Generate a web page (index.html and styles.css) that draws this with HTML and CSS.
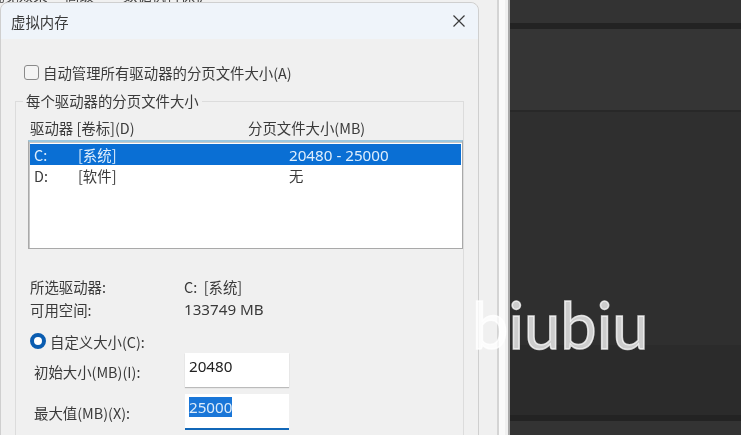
FILE: index.html
```html
<!DOCTYPE html>
<html lang="zh">
<head>
<meta charset="utf-8">
<title>虚拟内存</title>
<link rel="stylesheet" href="styles.css">
</head>
<body>
<div class="screen">
  <div class="backwin">
    <div class="tabs"><span class="tab-a">视觉效果</span><span class="tab-b">高级</span><span class="tab-c">数据执行保护</span></div>
    <div class="strip"></div>
  </div>
  <div class="dark">
    <div class="band h23 c33"></div>
    <div class="band h6 c22"></div>
    <div class="band h81 c34"></div>
    <div class="band h2 c27"></div>
    <div class="band h233 c30"></div>
    <div class="band h70 c2a"></div>
    <div class="band h6 c22"></div>
    <div class="band h14 c33"></div>
  </div>

  <section class="dialog">
    <header class="titlebar">
      <span>虚拟内存</span>
      <svg class="close" width="14" height="14" viewBox="0 0 14 14"><path d="M1.5 1.5 12.5 12.5M12.5 1.5 1.5 12.5" stroke="#3a3a3a" stroke-width="1.2" fill="none"/></svg>
    </header>
    <div class="content">
      <label class="auto"><span class="check"></span>自动管理所有驱动器的分页文件大小(A)</label>
      <fieldset class="group">
        <legend>每个驱动器的分页文件大小</legend>
        <div class="heads"><span>驱动器 [卷标](D)</span><span>分页文件大小(MB)</span></div>
        <div class="list">
          <div class="row selected"><span class="drv">C:</span><span class="vol">[系统]</span><span class="size num">20480 - 25000</span></div>
          <div class="row"><span class="drv">D:</span><span class="vol">[软件]</span><span class="size">无</span></div>
        </div>
        <div class="info first"><span class="k">所选驱动器:</span><span>C:&nbsp;&nbsp;[系统]</span></div>
        <div class="info second"><span class="k">可用空间:</span><span class="num">133749 MB</span></div>
        <label class="radio-line"><span class="radio"></span>自定义大小(C):</label>
        <div class="field"><span class="flabel">初始大小(MB)(I):</span><div class="input num">20480</div></div>
        <div class="field next"><span class="flabel">最大值(MB)(X):</span><div class="input focus num"><span class="sel">25000</span></div></div>
      </fieldset>
    </div>
  </section>

  <div class="mark">biubiu</div>
</div>
</body>
</html>
```
FILE: styles.css
```css
* { box-sizing: border-box; }
html, body { margin: 0; padding: 0; }
body { width: 741px; height: 435px; overflow: hidden; background: #f0f0f0; font-family: "Noto Sans CJK SC", "Noto Sans", sans-serif; }
.screen { position: relative; display: flex; width: 741px; height: 435px; overflow: hidden; }

.backwin { position: relative; display: flex; justify-content: flex-end; flex: none; width: 510px; height: 435px; background: #f0f0f0; border-right: 2px solid #a8a8a8; }
.tabs { position: absolute; left: -10px; top: -13px; display: flex; font-size: 14.4px; line-height: 16px; color: #444; filter: blur(.6px); }
.tab-a { width: 75px; }
.tab-b { width: 58px; }
.strip { width: 8px; margin-right: 3px; background: #fafafa; border-left: 2px solid #d4d4d4; }

.dark { flex: 1; display: flex; flex-direction: column; }
.band { flex: none; }
.h23 { height: 23px; } .h6 { height: 6px; } .h81 { height: 81px; } .h2 { height: 2px; }
.h233 { height: 233px; } .h70 { height: 70px; } .h14 { height: 14px; }
.c33 { background: #333; } .c22 { background: #232323; } .c34 { background: #353535; }
.c27 { background: #282828; } .c30 { background: #2f2f2f; } .c2a { background: #2b2b2b; }

.dialog { position: absolute; left: 0; top: 2px; width: 479px; height: 450px; background: #f0f0f0; border: 1px solid #cfcfcf; border-radius: 8px 8px 0 0; color: #3a3a3a; font-size: 14.4px; }
.dialog > * { filter: blur(.45px); }
.titlebar { display: flex; align-items: center; justify-content: space-between; height: 36px; padding: 0 12px 0 10px; background: #eff4fa; border-radius: 8px 8px 0 0; }
.close { display: block; }
.content { padding: 23px 17px 0 14px; }
.auto { display: flex; align-items: center; height: 20px; padding-left: 9px; gap: 4px; }
.check { width: 15px; height: 15px; background: #f4f4f4; border: 1px solid #8a8a8a; border-radius: 3px; }

.group { display: block; height: 400px; margin: 10px 0 0; padding: 0 0 0 14px; border: 1px solid #dcdcdc; border-bottom: 0; }
.group legend { padding: 0 3px; margin-left: -7px; line-height: 18px; }
.heads { display: flex; height: 20px; margin-top: 7px; align-items: center; }
.heads span:first-child { width: 218px; }
.list { width: 435px; height: 109px; margin: 3px 0 0 -2px; padding: 2px 1px; background: #fff; border: 1px solid #a9a9a9; border-top: 2px solid #9cc8df; box-shadow: inset 1px 1px 0 #c8c8c8; }
.row { display: flex; align-items: center; height: 21px; padding-left: 4px; }
.selected { background: #0a6fd4; color: #dfeefc; }
.drv { width: 44px; }
.vol { width: 211px; }
.num { font-family: "Noto Sans", sans-serif; font-size: 15.2px; }
.info { display: flex; align-items: center; height: 20px; }
.info .k { width: 154px; }
.first { margin-top: 27px; }
.second { margin-top: 3px; }
.radio-line { display: flex; align-items: center; height: 20px; margin-top: 12px; gap: 4px; }
.radio { width: 16px; height: 16px; border-radius: 50%; background: #fff; border: 4.5px solid #0a5cb0; }
.field { display: flex; align-items: flex-start; margin-top: 2px; padding-left: 4px; }
.field.next { margin-top: 7px; }
.flabel { width: 151px; line-height: 20px; padding-top: 9px; }
.input { width: 104px; height: 34px; padding: 3px 4px; background: #fff; line-height: 20px; box-shadow: 0 1px 1px #bbb; color: #222; }
.focus { border-bottom: 2px solid #1167b8; height: 36px; box-shadow: none; }
.sel { display: inline-block; background: #1976d8; color: #dcebfa; }

.mark { position: absolute; left: 472px; top: 285px; font-family: Lato, sans-serif; font-weight: 400; font-size: 65px; line-height: 78px; color: rgba(255,255,255,.76); -webkit-text-stroke: 1.5px rgba(255,255,255,.76); paint-order: stroke fill; filter: blur(.5px); }
```
